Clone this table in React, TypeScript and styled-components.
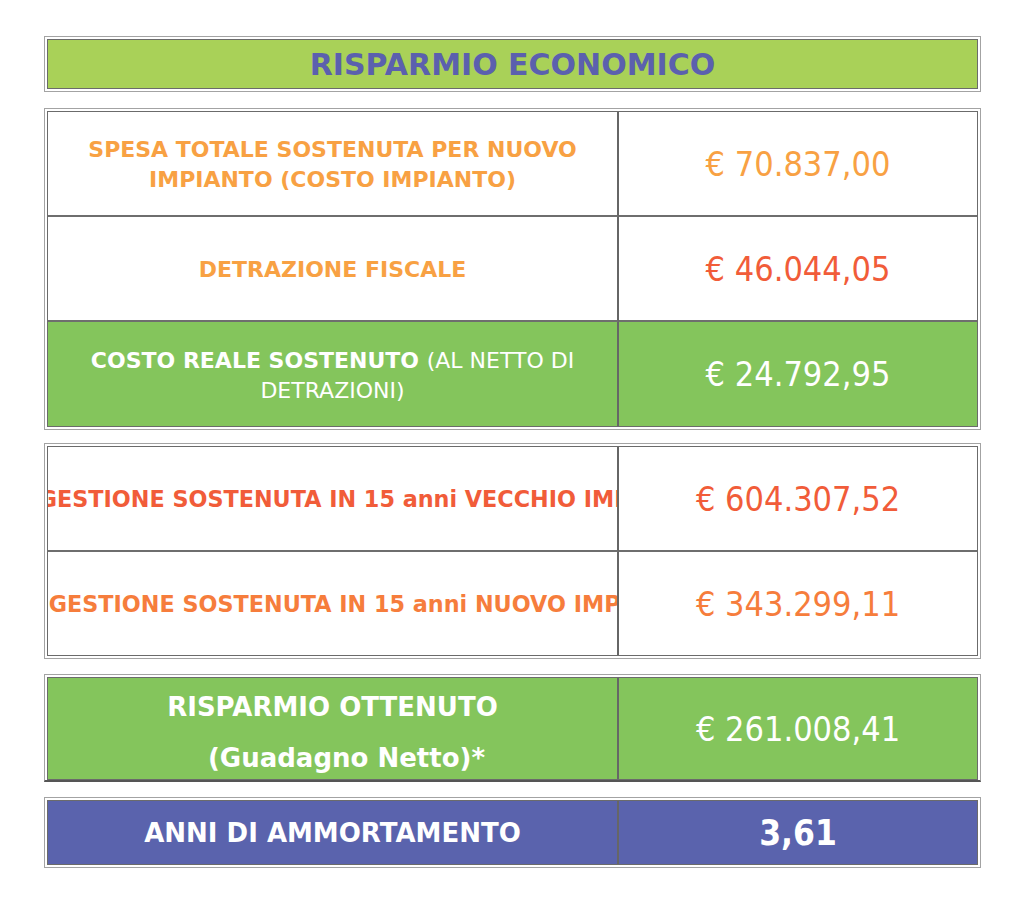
import React from "react";
import styled, { createGlobalStyle } from "styled-components";

const Global = createGlobalStyle`
  html, body { margin: 0; padding: 0; background: #ffffff; }
  body { font-family: "DejaVu Sans", Verdana, sans-serif; }
`;

const Page = styled.div`
  display: flex;
  flex-direction: column;
  padding: 36px 0 0 44px;
  width: 937px;
`;

const Frame = styled.div<{ $mt?: number; $heavy?: boolean }>`
  box-sizing: border-box;
  width: 937px;
  border: 1px solid #a3a3a3;
  border-bottom: ${(p) => (p.$heavy ? "2px solid #555" : "1px solid #a3a3a3")};
  padding: 2px;
  padding-bottom: ${(p) => (p.$heavy ? 0 : 2)}px;
  background: #fff;
  margin-top: ${(p) => p.$mt ?? 0}px;
`;

const Grid = styled.div<{ $single?: boolean }>`
  display: grid;
  grid-template-columns: ${(p) => (p.$single ? "1fr" : "571px 1fr")};
  border: 1px solid #6b6b6b;
`;

const Cell = styled.div<{
  $h: number;
  $bg?: string;
  $color: string;
  $divider?: boolean;
  $sep?: boolean;
}>`
  box-sizing: content-box;
  height: ${(p) => p.$h}px;
  background: ${(p) => p.$bg ?? "#ffffff"};
  color: ${(p) => p.$color};
  border-right: ${(p) => (p.$divider ? "2px solid #666" : "none")};
  border-bottom: ${(p) => (p.$sep ? "2px solid #6e6e6e" : "none")};
  display: flex;
  align-items: center;
  justify-content: center;
  text-align: center;
  overflow: hidden;
`;

const Title = styled.div`
  font-weight: bold;
  font-size: 30px;
  color: #5b60ae;
`;

const Label = styled.div<{ $size?: number; $shift?: number }>`
  font-weight: bold;
  font-size: ${(p) => p.$size ?? 22}px;
  line-height: 30px;
  padding: ${(p) => p.$shift ?? 0}px 6px 0;
`;

const Clipped = styled.div`
  font-weight: bold;
  font-size: 22.3px;
  white-space: nowrap;
  flex-shrink: 0;
`;

const Light = styled.span`
  font-weight: normal;
`;

const Value = styled.div<{ $bold?: boolean; $size?: number }>`
  font-family: "DejaVu Sans Condensed", "DejaVu Sans", sans-serif;
  font-stretch: condensed;
  font-size: ${(p) => p.$size ?? 34}px;
  font-weight: ${(p) => (p.$bold ? "bold" : "normal")};
`;

const Stack = styled.div`
  display: flex;
  flex-direction: column;
  gap: 20px;
  padding-top: 9px;
  font-weight: bold;
  font-size: 26px;
  line-height: 31px;
`;

const Indented = styled.span`
  padding-left: 28px;
`;

const ORANGE = "#f8a143";
const RED = "#f15c39";
const ORANGE_RED = "#f67d3c";
const GREEN = "#84c55c";
const LIME = "#a9d158";
const BLUE = "#5a63ad";

export default function App() {
  return (
    <>
      <Global />
      <Page>
        <Frame>
          <Grid $single>
            <Cell $h={48} $bg={LIME} $color="#5b60ae">
              <Title>RISPARMIO ECONOMICO</Title>
            </Cell>
          </Grid>
        </Frame>

        <Frame $mt={16}>
          <Grid>
            <Cell $h={103} $color={ORANGE} $divider $sep>
              <Label $shift={3}>
                SPESA TOTALE SOSTENUTA PER NUOVO
                <br />
                IMPIANTO (COSTO IMPIANTO)
              </Label>
            </Cell>
            <Cell $h={103} $color={ORANGE} $sep>
              <Value>€ 70.837,00</Value>
            </Cell>
            <Cell $h={103} $color={ORANGE} $divider $sep>
              <Label $shift={2}>DETRAZIONE FISCALE</Label>
            </Cell>
            <Cell $h={103} $color={RED} $sep>
              <Value>€ 46.044,05</Value>
            </Cell>
            <Cell $h={104} $bg={GREEN} $color="#ffffff" $divider>
              <Label $shift={3}>
                COSTO REALE SOSTENUTO <Light>(AL NETTO DI</Light>
                <br />
                <Light>DETRAZIONI)</Light>
              </Label>
            </Cell>
            <Cell $h={104} $bg={GREEN} $color="#ffffff">
              <Value>€ 24.792,95</Value>
            </Cell>
          </Grid>
        </Frame>

        <Frame $mt={13}>
          <Grid>
            <Cell $h={103} $color={RED} $divider $sep>
              <Clipped>COSTI GESTIONE SOSTENUTA IN 15 anni VECCHIO IMPIANTO</Clipped>
            </Cell>
            <Cell $h={103} $color={RED} $sep>
              <Value>€ 604.307,52</Value>
            </Cell>
            <Cell $h={103} $color={ORANGE_RED} $divider>
              <Clipped>COSTI GESTIONE SOSTENUTA IN 15 anni NUOVO IMPIANTO</Clipped>
            </Cell>
            <Cell $h={103} $color={ORANGE_RED}>
              <Value>€ 343.299,11</Value>
            </Cell>
          </Grid>
        </Frame>

        <Frame $mt={15} $heavy>
          <Grid>
            <Cell $h={101} $bg={GREEN} $color="#ffffff" $divider>
              <Stack>
                <span>RISPARMIO OTTENUTO</span>
                <Indented>(Guadagno Netto)*</Indented>
              </Stack>
            </Cell>
            <Cell $h={101} $bg={GREEN} $color="#ffffff">
              <Value>€ 261.008,41</Value>
            </Cell>
          </Grid>
        </Frame>

        <Frame $mt={15}>
          <Grid>
            <Cell $h={63} $bg={BLUE} $color="#ffffff" $divider>
              <Label $size={26}>ANNI DI AMMORTAMENTO</Label>
            </Cell>
            <Cell $h={63} $bg={BLUE} $color="#ffffff">
              <Value $bold $size={35}>3,61</Value>
            </Cell>
          </Grid>
        </Frame>
      </Page>
    </>
  );
}
